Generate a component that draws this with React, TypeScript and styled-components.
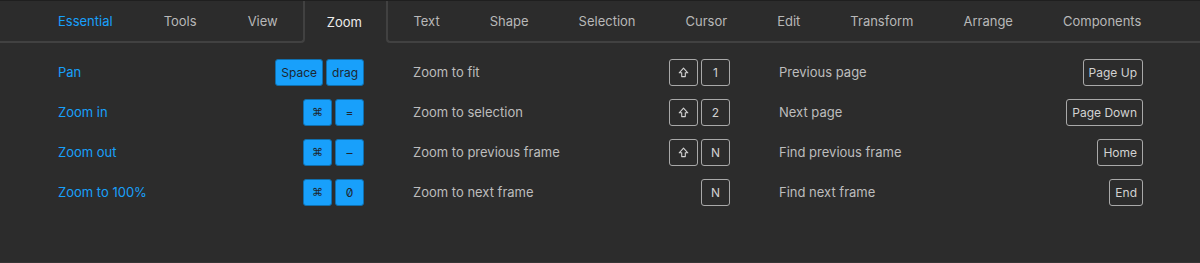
import React from "react";
import styled, { createGlobalStyle, css } from "styled-components";

const Global = createGlobalStyle`
  html, body { margin: 0; padding: 0; background: #2c2c2c; }
  body { font-family: Inter, "Noto Sans", "Liberation Sans", sans-serif; -webkit-font-smoothing: antialiased; }
`;

const BORDER = "#414141";

const Panel = styled.div`
  height: 263px;
  box-sizing: border-box;
  background: #2c2c2c;
  border-top: 1px solid #1f1f1f;
  border-bottom: 1px solid #353535;
  overflow: hidden;
`;

const TabBar = styled.div`
  display: flex;
  height: 42px;
`;

const TabGroup = styled.div<{ $side: "left" | "right" }>`
  display: flex;
  border-bottom: 2px solid ${BORDER};
  ${(p) =>
    p.$side === "left"
      ? css`
          padding-left: 32.5px;
          margin-right: -4px;
          border-right: 2px solid ${BORDER};
          border-bottom-right-radius: 4px;
        `
      : css`
          flex: 1;
          margin-left: -1px;
          border-left: 2px solid ${BORDER};
          border-bottom-left-radius: 4px;
        `}
`;

const Tab = styled.div<{ $tone?: "accent" | "active" | "normal"; $pad?: number }>`
  display: flex;
  align-items: center;
  padding: 0 ${(p) => p.$pad ?? 25.5}px;
  font-size: 13px;
  white-space: nowrap;
  color: ${(p) =>
    p.$tone === "accent" ? "#18a0fb" : p.$tone === "active" ? "#ececec" : "#b8b8b8"};
`;

const ActiveTab = styled(Tab)`
  margin-top: -1px;
`;

const Content = styled.div`
  display: grid;
  grid-template-columns: 306px 317px 364px;
  column-gap: 49px;
  padding: 9px 0 0 58px;
`;

const Column = styled.div`
  display: flex;
  flex-direction: column;
`;

const Row = styled.div`
  display: flex;
  align-items: center;
  justify-content: space-between;
  height: 40px;
`;

const Label = styled.span<{ $accent?: boolean }>`
  font-size: 13px;
  color: ${(p) => (p.$accent ? "#18a0fb" : "#bdbdbd")};
  white-space: nowrap;
`;

const Keys = styled.div`
  display: flex;
  gap: 3px;
`;

const Key = styled.span<{ $primary?: boolean; $mono?: boolean }>`
  display: inline-flex;
  align-items: center;
  justify-content: center;
  box-sizing: border-box;
  height: 27px;
  min-width: 29px;
  padding: 0 5px;
  border-radius: 3px;
  font-size: 12px;
  white-space: nowrap;
  ${(p) =>
    p.$primary
      ? css`
          background: #18a0fb;
          color: #1d2731;
          border: 1px solid #0f6fae;
        `
      : css`
          background: transparent;
          color: #d2d2d2;
          border: 1px solid #a9a9a9;
        `}
  ${(p) =>
    p.$mono &&
    css`
      font-feature-settings: "zero" 1;
    `}
`;

const Glyph = styled.span`
  font-family: "DejaVu Sans", sans-serif;
  font-size: 11px;
`;

const ShiftIcon = () => (
  <svg width="11" height="11" viewBox="0 0 11 11" fill="none">
    <path
      d="M5.5 1.2 L9.8 5.8 H7.3 V9.6 H3.7 V5.8 H1.2 Z"
      stroke="currentColor"
      strokeWidth="1.1"
      strokeLinejoin="round"
    />
  </svg>
);

type KeyDef = { k: React.ReactNode; mono?: boolean };
type Item = { label: string; keys: KeyDef[] };

const CMD: KeyDef = { k: <Glyph>⌘</Glyph> };
const SHIFT: KeyDef = { k: <ShiftIcon /> };

const col1: Item[] = [
  { label: "Pan", keys: [{ k: "Space" }, { k: "drag" }] },
  { label: "Zoom in", keys: [CMD, { k: "=" }] },
  { label: "Zoom out", keys: [CMD, { k: "–" }] },
  { label: "Zoom to 100%", keys: [CMD, { k: "0", mono: true }] },
];

const col2: Item[] = [
  { label: "Zoom to fit", keys: [SHIFT, { k: "1" }] },
  { label: "Zoom to selection", keys: [SHIFT, { k: "2" }] },
  { label: "Zoom to previous frame", keys: [SHIFT, { k: "N" }] },
  { label: "Zoom to next frame", keys: [{ k: "N" }] },
];

const col3: Item[] = [
  { label: "Previous page", keys: [{ k: "Page Up" }] },
  { label: "Next page", keys: [{ k: "Page Down" }] },
  { label: "Find previous frame", keys: [{ k: "Home" }] },
  { label: "Find next frame", keys: [{ k: "End" }] },
];

const ShortcutColumn = ({ items, primary }: { items: Item[]; primary?: boolean }) => (
  <Column>
    {items.map((it) => (
      <Row key={it.label}>
        <Label $accent={primary}>{it.label}</Label>
        <Keys>
          {it.keys.map((key, i) => (
            <Key key={i} $primary={primary} $mono={key.mono}>
              {key.k}
            </Key>
          ))}
        </Keys>
      </Row>
    ))}
  </Column>
);

const leftTabs = ["Essential", "Tools", "View"];
const rightTabs = ["Text", "Shape", "Selection", "Cursor", "Edit", "Transform", "Arrange", "Components"];

export default function App() {
  return (
    <>
      <Global />
      <Panel>
        <TabBar>
          <TabGroup $side="left">
            {leftTabs.map((t, i) => (
              <Tab key={t} $tone={i === 0 ? "accent" : "normal"}>
                {t}
              </Tab>
            ))}
          </TabGroup>
          <ActiveTab $tone="active">Zoom</ActiveTab>
          <TabGroup $side="right">
            {rightTabs.map((t) => (
              <Tab key={t} $pad={25}>
                {t}
              </Tab>
            ))}
          </TabGroup>
        </TabBar>
        <Content>
          <ShortcutColumn items={col1} primary />
          <ShortcutColumn items={col2} />
          <ShortcutColumn items={col3} />
        </Content>
      </Panel>
    </>
  );
}
